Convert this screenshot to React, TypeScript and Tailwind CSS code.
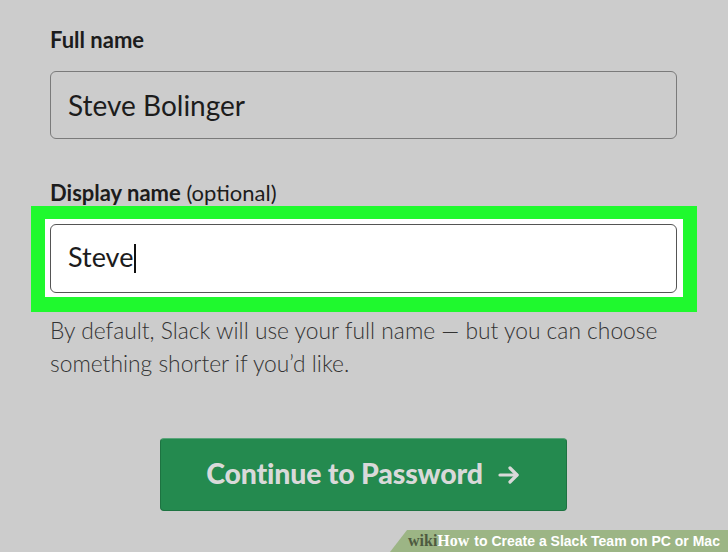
import React from "react";

export default function App() {
  return (
    <div
      className="relative w-[728px] h-[552px] overflow-hidden bg-[#cccccc] text-[#1a1a1a]"
      style={{ fontFamily: "Lato, 'Open Sans', sans-serif" }}
    >
      <div className="flex flex-col pl-[50px] pr-[51px] pt-[27px]">
        <div className="text-[22px] leading-[26px] font-bold text-[#1c1c1c]">Full name</div>
        <div className="mt-[18px] h-[68px] rounded-[6px] border border-[#7a7a7a] flex items-center pl-[17px] text-[28px] text-[#1c1c1c]">
          Steve Bolinger
        </div>
        <div className="mt-[41px] text-[22px] leading-[26px] text-[#1c1c1c]">
          <span className="font-bold">Display name</span> (optional)
        </div>
        <div className="-ml-[19px] -mr-[20px] bg-[#1ff92e] pt-[13px] pb-[15px] pl-[14px] pr-[14px]">
          <div className="bg-white pt-[5px] pb-[4px] pl-[5px] pr-[6px]">
            <div className="h-[69px] rounded-[6px] border border-[#555555] bg-white flex items-center pl-[17px] text-[27px] text-[#1c1c1c]">
              <span className="-mt-[3px]">Steve</span>
              <span className="inline-block w-[1.5px] h-[29px] bg-[#111] ml-[1px]" />
            </div>
          </div>
        </div>
        <p className="mt-[2px] text-[22.8px] leading-[33px] font-light text-[#333333] whitespace-nowrap">
          By default, Slack will use your full name — but you can choose
          <br />
          something shorter if you’d like.
        </p>
        <div className="mt-[58px] flex justify-center pr-[1px]">
          <button className="w-[407px] h-[73px] rounded-[4px] bg-[#248a4f] border border-[#1d7341] border-t-[#5aa57a] flex items-center justify-center gap-[15px] pb-[2px] text-[28.5px] font-black text-[#d9d9d9] tracking-[-0.2px]">
            <span>Continue to Password</span>
            <svg width="22" height="18" viewBox="0 0 22 18" fill="none" stroke="#d9d9d9" strokeWidth="3.2" strokeLinecap="round" strokeLinejoin="round" className="mt-[2px]">
              <path d="M2 9h17" />
              <path d="M12 2l7 7-7 7" />
            </svg>
          </button>
        </div>
      </div>

      <div
        className="absolute right-0 bottom-0 h-[22px] w-[338px] bg-[#9cb585] flex items-center pl-[18px] whitespace-nowrap"
        style={{ clipPath: "polygon(17px 0, 100% 0, 100% 100%, 0 100%)" }}
      >
        <span className="text-[16px] font-bold text-[#4e5a40] leading-none" style={{ fontFamily: "'Liberation Serif', 'DejaVu Serif', serif" }}>
          wiki
        </span>
        <span className="text-[16px] font-bold text-white leading-none" style={{ fontFamily: "'Liberation Serif', 'DejaVu Serif', serif" }}>
          How
        </span>
        <span className="ml-[5px] text-[14px] font-bold text-white leading-none" style={{ fontFamily: "'Liberation Sans', Arial, sans-serif" }}>
          to Create a Slack Team on PC or Mac
        </span>
      </div>
    </div>
  );
}
